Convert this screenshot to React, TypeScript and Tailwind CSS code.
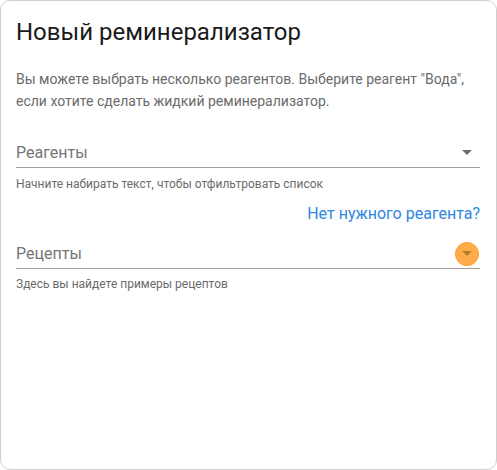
import React from "react";

const Arrow = ({ color }: { color: string }) => (
  <svg width="10" height="5" viewBox="0 0 10 5">
    <path d="M0 0 L10 0 L5 5 Z" fill={color} />
  </svg>
);

export default function App() {
  return (
    <div className="w-[497px] h-[470px] bg-white" style={{ fontFamily: "Roboto, 'Noto Sans', sans-serif" }}>
      <div className="w-full h-full border border-[#cfcfcf] rounded-[10px] bg-white pl-[15px] pr-[16px] pt-[15px] flex flex-col">
        <h1 className="text-[24px] leading-[32px] text-[#1a1a1a] font-normal">Новый реминерализатор</h1>
        <p className="mt-[20px] text-[14px] leading-[22px] text-[#6b6b6b]">
          Вы можете выбрать несколько реагентов. Выберите реагент "Вода", если хотите сделать жидкий реминерализатор.
        </p>
        <div className="mt-[27px]">
          <div className="flex items-center justify-between border-b border-[#9e9e9e] h-[29px] pb-[1px]">
            <span className="text-[16px] text-[#757575]">Реагенты</span>
            <span className="w-[24px] h-[24px] flex items-center justify-center mr-[1px]">
              <Arrow color="#6e6e6e" />
            </span>
          </div>
          <div className="mt-[9px] text-[12px] leading-[14px] text-[#6b6b6b]">Начните набирать текст, чтобы отфильтровать список</div>
        </div>
        <div className="mt-[13px] text-right text-[16px] leading-[20px] text-[#2f86e0]">Нет нужного реагента?</div>
        <div className="mt-[16px]">
          <div className="flex items-center justify-between border-b border-[#9e9e9e] h-[29px] pb-[1px]">
            <span className="text-[16px] text-[#757575]">Рецепты</span>
            <span className="w-[24px] h-[24px] rounded-full bg-[#ffad4a] border border-[#ff9c1f] flex items-center justify-center mr-[1px]">
              <Arrow color="#b87b2e" />
            </span>
          </div>
          <div className="mt-[8px] text-[12px] leading-[14px] text-[#6b6b6b]">Здесь вы найдете примеры рецептов</div>
        </div>
      </div>
    </div>
  );
}
